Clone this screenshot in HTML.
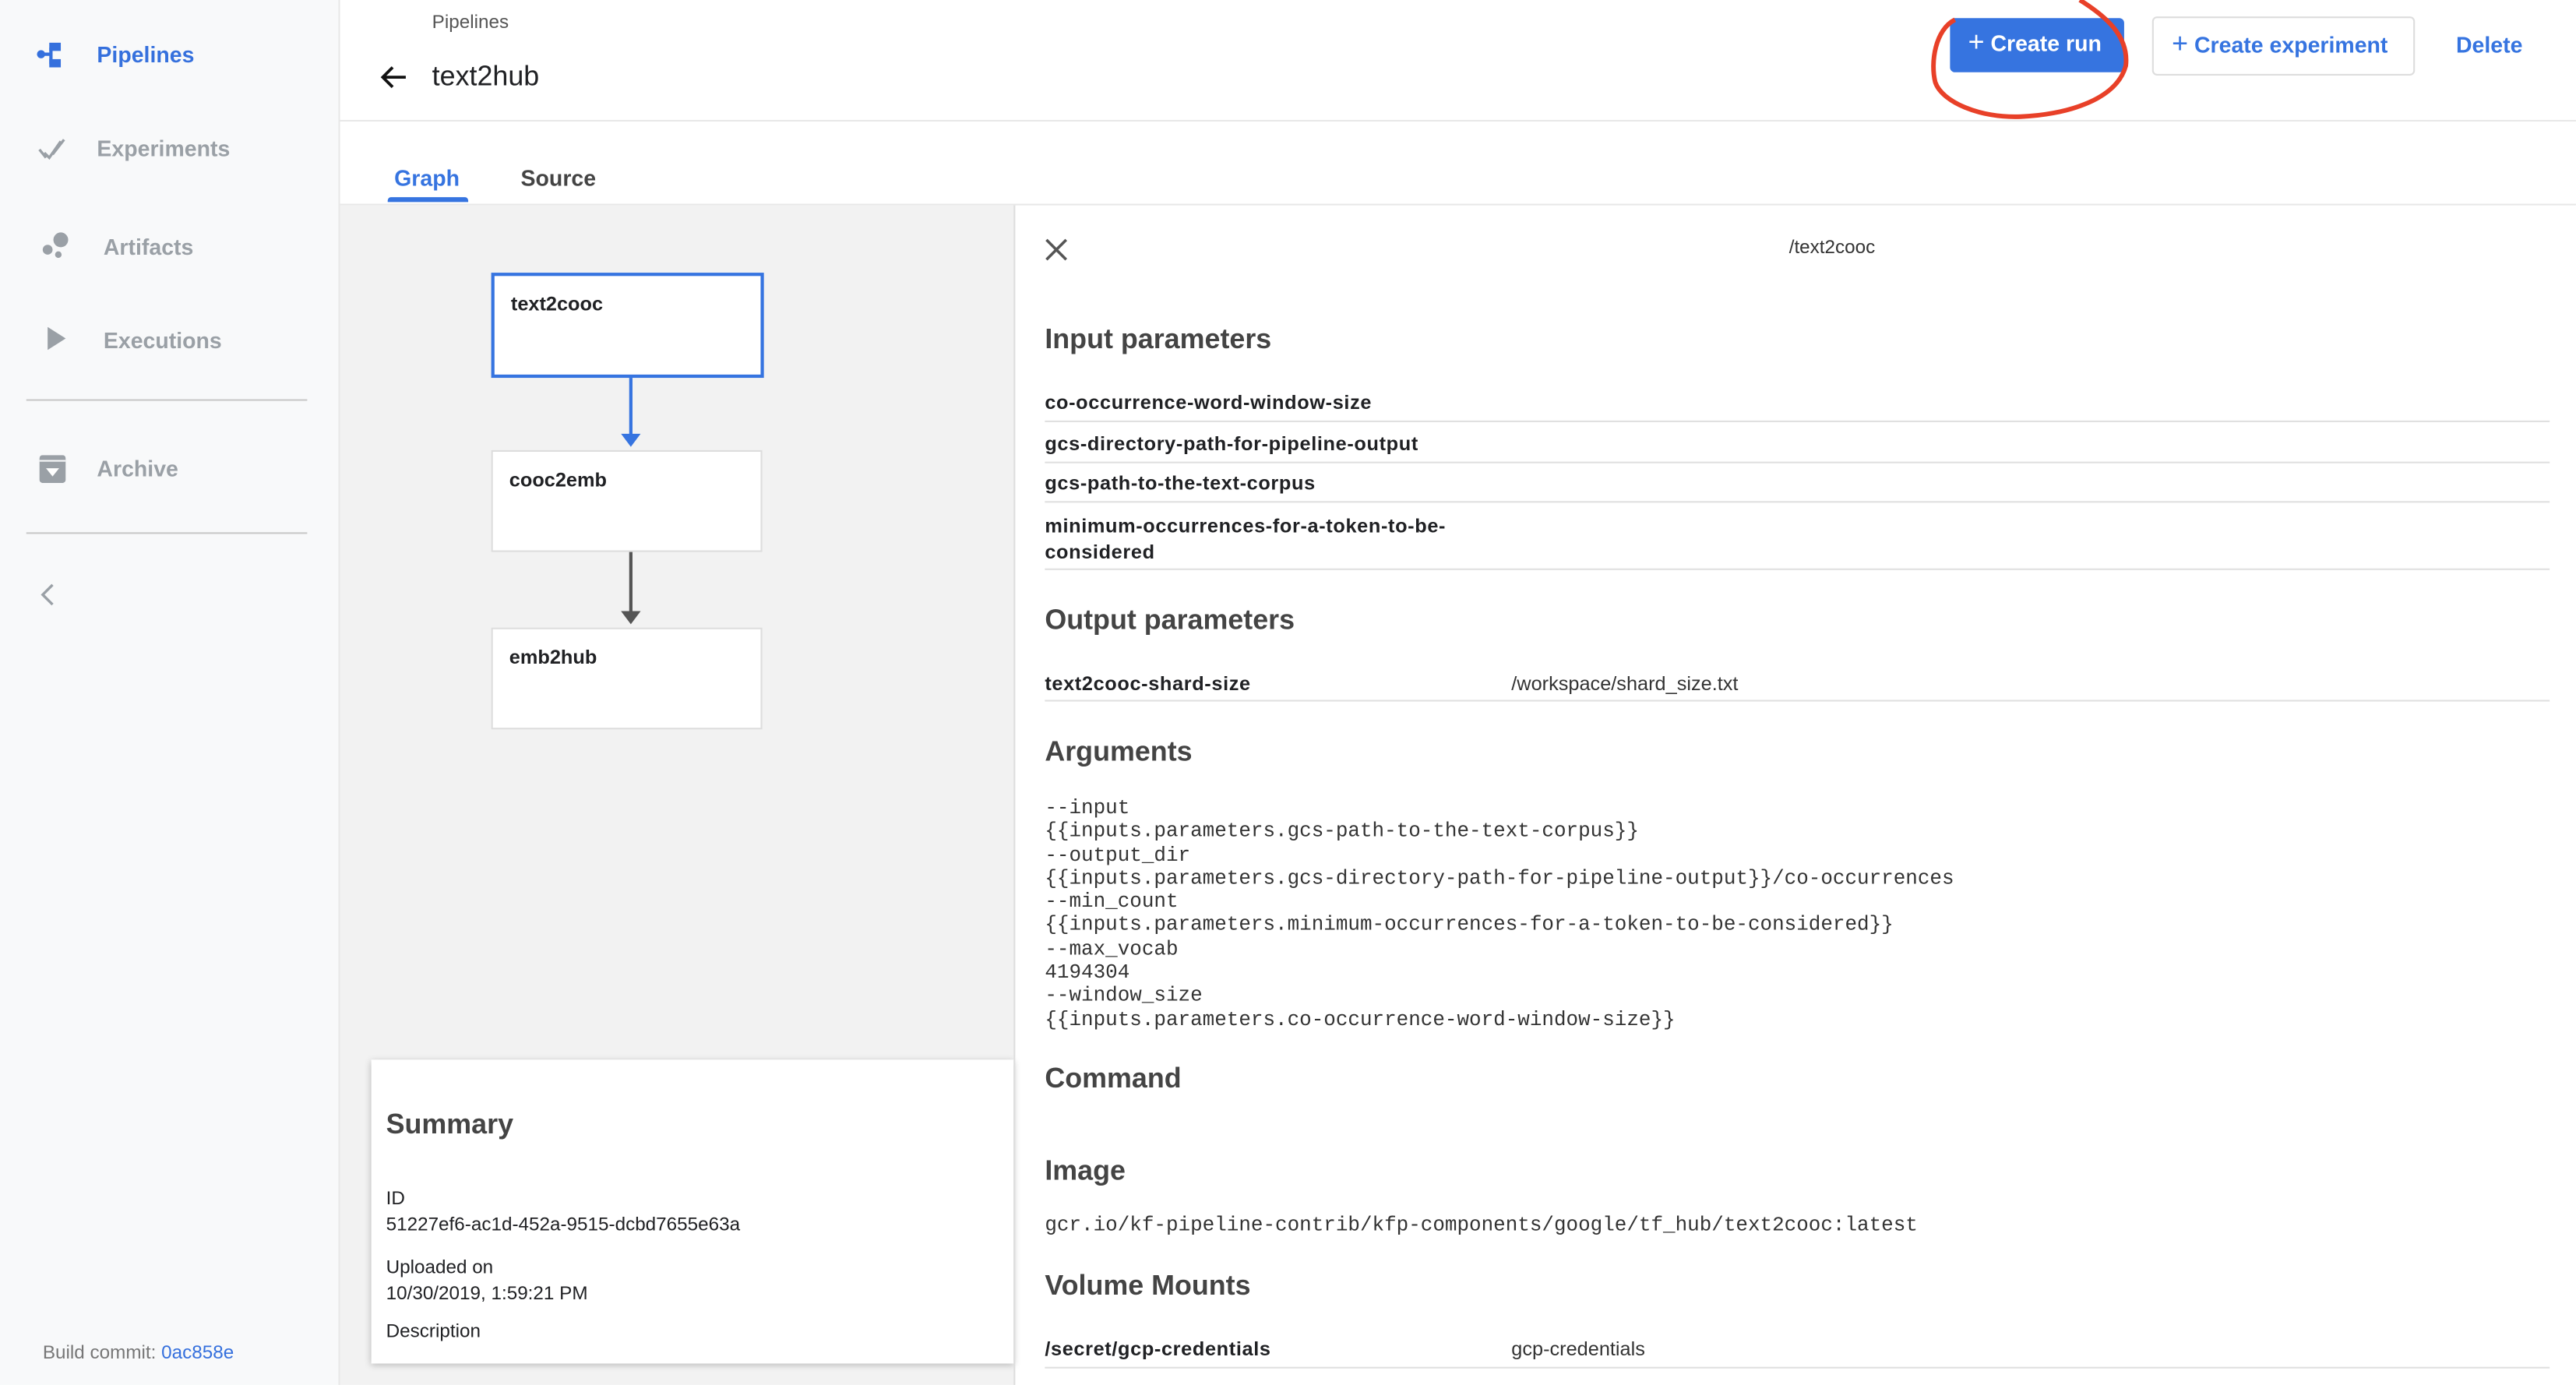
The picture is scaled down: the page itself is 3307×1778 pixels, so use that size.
<!DOCTYPE html>
<html><head><meta charset="utf-8"><style>
*{margin:0;padding:0;box-sizing:border-box}
html,body{width:3307px;height:1777px;overflow:hidden;background:#fff}
#w{position:absolute;left:0;top:0;width:1568px;height:843px;transform:scale(2.109);transform-origin:0 0;font-family:"Liberation Sans",sans-serif;color:#202124}
.a{position:absolute}
.nav{font-size:13.5px;font-weight:bold;color:#9aa0a6}
.mono{font-family:"Liberation Mono",monospace;font-size:12.3px;line-height:14.3px;color:#333}
.h{font-size:17px;font-weight:bold;color:#444}
.k{font-size:12px;letter-spacing:0.3px;font-weight:bold;color:#202124}
.row{position:absolute;left:636px;width:916px;border-bottom:1px solid #e0e0e0}
.node{position:absolute;background:#fff;border:1px solid #ddd;font-size:12px;font-weight:bold;padding:10px 10px;width:165px;height:62px}
</style></head><body><div id="w">
<div class="a" style="left:0;top:0;width:207px;height:843px;background:#f8f9fa;border-right:1px solid #e8e8e8"></div>
<svg class="a" style="left:22px;top:25px" width="18" height="18" viewBox="0 0 18 18"><circle cx="3" cy="8" r="2.5" fill="#3570dd"/><rect x="8" y="1" width="7" height="5" fill="#3570dd"/><rect x="8" y="11" width="7" height="5" fill="#3570dd"/><path d="M5 8H9M9 4V14" stroke="#3570dd" stroke-width="2" fill="none"/></svg>
<div class="a nav" style="left:59px;top:26px;color:#3570dd">Pipelines</div>
<svg class="a" style="left:23px;top:84px" width="18" height="14"><path d="M1 7l4 5M4 9l3 3 7-10M9 10l7-9" stroke="#9aa0a6" stroke-width="1.6" fill="none"/></svg>
<div class="a nav" style="left:59px;top:83px">Experiments</div>
<svg class="a" style="left:25px;top:140px" width="18" height="18"><circle cx="12" cy="6" r="4.5" fill="#9aa0a6"/><circle cx="4" cy="12" r="3" fill="#9aa0a6"/><circle cx="10.5" cy="15" r="2" fill="#9aa0a6"/></svg>
<div class="a nav" style="left:63px;top:143px">Artifacts</div>
<svg class="a" style="left:28px;top:198px" width="14" height="16"><path d="M1 1L12 8 1 15Z" fill="#9aa0a6"/></svg>
<div class="a nav" style="left:63px;top:200px">Executions</div>
<div class="a" style="left:16px;top:243px;width:171px;height:1px;background:#c8c8c8"></div>
<svg class="a" style="left:24px;top:277px" width="16" height="17"><rect x="0" y="0" width="16" height="17" rx="2" fill="#9aa0a6"/><path d="M4 8h8l-4 5z" fill="#fff"/><rect x="0" y="3" width="16" height="1" fill="#f8f9fa"/></svg>
<div class="a nav" style="left:59px;top:278px">Archive</div>
<div class="a" style="left:16px;top:324px;width:171px;height:1px;background:#c8c8c8"></div>
<svg class="a" style="left:24px;top:355px" width="10" height="14"><path d="M8 1L2 7l6 6" stroke="#9aa0a6" stroke-width="1.6" fill="none"/></svg>
<div class="a" style="left:26px;top:818px;font-size:11.5px;color:#777">Build commit: <span style="color:#3570dd">0ac858e</span></div>

<div class="a" style="left:263px;top:8px;font-size:11.5px;color:#555">Pipelines</div>
<svg class="a" style="left:231px;top:39px" width="18" height="16"><path d="M16 8H2M8 2L2 8l6 6" stroke="#111" stroke-width="1.8" fill="none"/></svg>
<div class="a" style="left:263px;top:37px;font-size:17px">text2hub</div>
<div class="a" style="left:1187px;top:11px;width:106px;height:33px;background:#3674e0;border-radius:3px;color:#fff;font-size:13.5px;font-weight:bold;padding:8px 0 0 11px"><span style="font-weight:normal;font-size:17px;line-height:14px">+</span> Create run</div>
<div class="a" style="left:1310px;top:10px;width:160px;height:36px;border:1px solid #ddd;border-radius:3px;color:#3674e0;font-size:13.5px;font-weight:bold;padding:9px 0 0 11px"><span style="font-weight:normal;font-size:17px;line-height:14px">+</span> Create experiment</div>
<div class="a" style="left:1495px;top:20px;color:#3674e0;font-size:13.5px;font-weight:bold">Delete</div>
<svg class="a" style="left:1170px;top:0" width="135" height="80"><path d="M20 12C8 18 5 38 8 50C12 62 35 72 60 71C85 70 118 62 124 40C126 22 112 10 96 0" stroke="#e84028" stroke-width="2.8" fill="none"/></svg>
<div class="a" style="left:207px;top:73px;width:1361px;height:1px;background:#e8e8e8"></div>
<div class="a" style="left:240px;top:101px;font-size:13.5px;font-weight:bold;color:#3674e0">Graph</div>
<div class="a" style="left:236px;top:120px;width:49px;height:3px;background:#3674e0;border-radius:2px 2px 0 0"></div>
<div class="a" style="left:317px;top:101px;font-size:13.5px;font-weight:bold;color:#444">Source</div>
<div class="a" style="left:207px;top:124px;width:1361px;height:1px;background:#e8e8e8"></div>

<div class="a" style="left:207px;top:125px;width:410px;height:718px;background:#f2f2f2"></div>
<div class="node" style="left:299px;top:166px;border:2px solid #3674e0;height:64px;width:166px">text2cooc</div>
<div class="a" style="left:383px;top:230px;width:2px;height:36px;background:#3674e0"></div>
<svg class="a" style="left:378px;top:264px" width="12" height="8"><path d="M0 0h12L6 8z" fill="#3674e0"/></svg>
<div class="node" style="left:299px;top:274px">cooc2emb</div>
<div class="a" style="left:383px;top:336px;width:2px;height:38px;background:#555"></div>
<svg class="a" style="left:378px;top:372px" width="12" height="8"><path d="M0 0h12L6 8z" fill="#555"/></svg>
<div class="node" style="left:299px;top:382px">emb2hub</div>
<div class="a" style="left:226px;top:645px;width:391px;height:185px;background:#fff;box-shadow:0 1px 4px rgba(0,0,0,.25)"></div>
<div class="a h" style="left:235px;top:675px">Summary</div>
<div class="a" style="left:235px;top:722px;font-size:11.5px;line-height:16px">ID<br>51227ef6-ac1d-452a-9515-dcbd7655e63a</div>
<div class="a" style="left:235px;top:764px;font-size:11.5px;line-height:16px">Uploaded on<br>10/30/2019, 1:59:21 PM</div>
<div class="a" style="left:235px;top:805px;font-size:11.5px">Description</div>

<div class="a" style="left:617px;top:125px;width:1px;height:718px;background:#ddd"></div>
<svg class="a" style="left:636px;top:145px" width="14" height="14"><path d="M1 1l12 12M13 1L1 13" stroke="#555" stroke-width="1.7"/></svg>
<div class="a" style="left:1089px;top:145px;font-size:11.5px;color:#333">/text2cooc</div>
<div class="a h" style="left:636px;top:197px">Input parameters</div>
<div class="row" style="top:236px;height:21px"></div><div class="a k" style="left:636px;top:238px">co-occurrence-word-window-size</div>
<div class="row" style="top:257px;height:25px"></div><div class="a k" style="left:636px;top:263px">gcs-directory-path-for-pipeline-output</div>
<div class="row" style="top:282px;height:24px"></div><div class="a k" style="left:636px;top:287px">gcs-path-to-the-text-corpus</div>
<div class="row" style="top:306px;height:41px"></div><div class="a k" style="left:636px;top:312px;line-height:16px">minimum-occurrences-for-a-token-to-be-<br>considered</div>
<div class="a h" style="left:636px;top:368px">Output parameters</div>
<div class="row" style="top:404px;height:23px"></div><div class="a k" style="left:636px;top:409px">text2cooc-shard-size</div>
<div class="a" style="left:920px;top:409px;font-size:12px;color:#333">/workspace/shard_size.txt</div>
<div class="a h" style="left:636px;top:448px">Arguments</div>
<div class="a mono" style="left:636px;top:485px;white-space:pre">--input
{{inputs.parameters.gcs-path-to-the-text-corpus}}
--output_dir
{{inputs.parameters.gcs-directory-path-for-pipeline-output}}/co-occurrences
--min_count
{{inputs.parameters.minimum-occurrences-for-a-token-to-be-considered}}
--max_vocab
4194304
--window_size
{{inputs.parameters.co-occurrence-word-window-size}}</div>
<div class="a h" style="left:636px;top:647px">Command</div>
<div class="a h" style="left:636px;top:703px">Image</div>
<div class="a mono" style="left:636px;top:739px">gcr.io/kf-pipeline-contrib/kfp-components/google/tf_hub/text2cooc:latest</div>
<div class="a h" style="left:636px;top:773px">Volume Mounts</div>
<div class="row" style="top:810px;height:23px"></div><div class="a k" style="left:636px;top:814px">/secret/gcp-credentials</div>
<div class="a" style="left:920px;top:814px;font-size:12px;color:#333">gcp-credentials</div>
</div></body></html>
